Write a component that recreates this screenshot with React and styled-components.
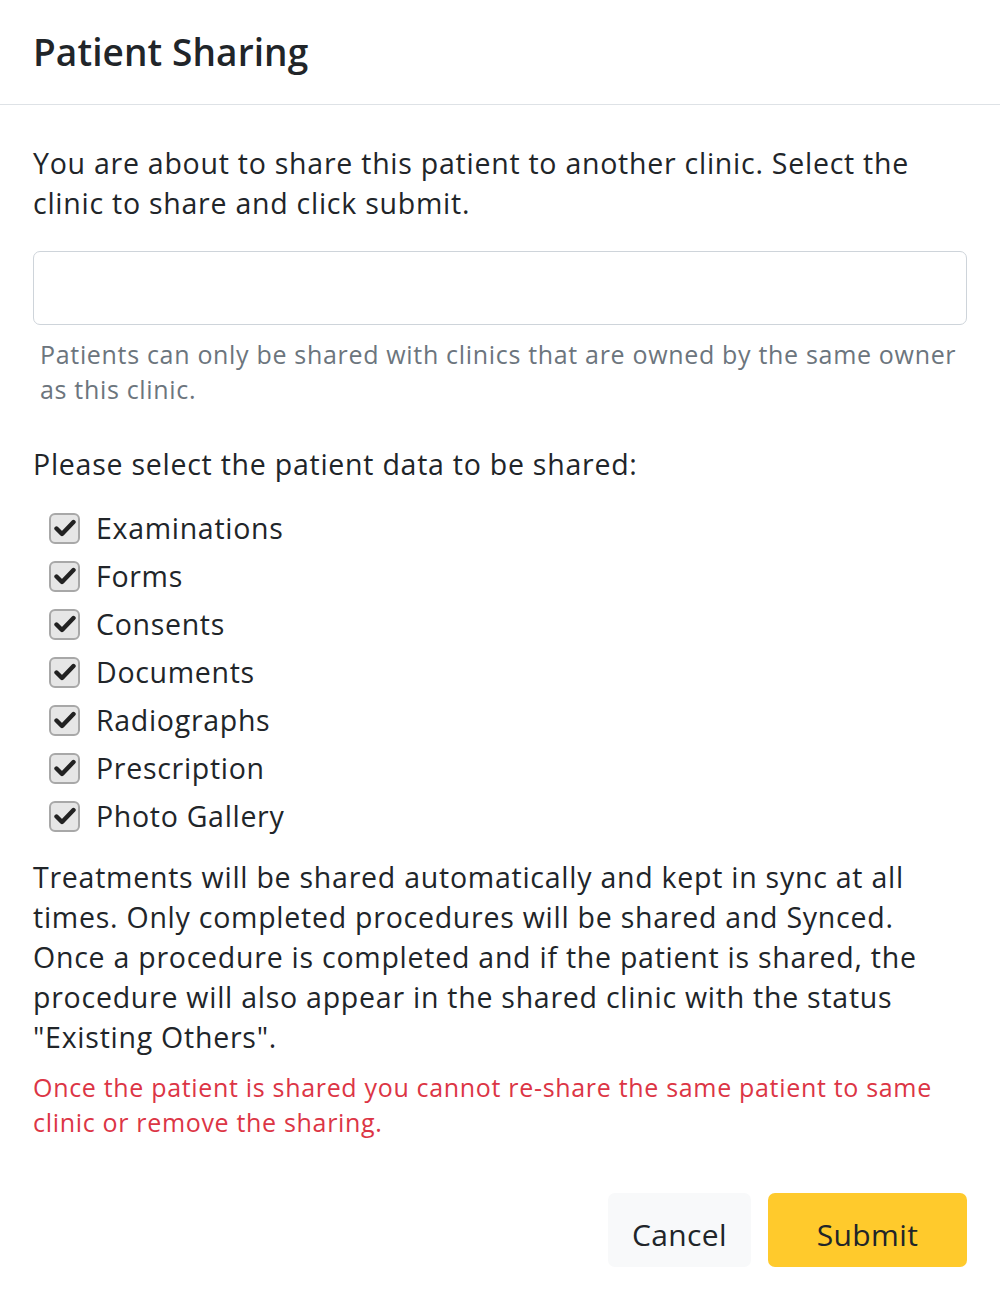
import React, { useState } from 'react';
import styled, { createGlobalStyle } from 'styled-components';

const GlobalStyle = createGlobalStyle`
  html, body {
    margin: 0;
    padding: 0;
    background: #fff;
  }
  body {
    font-family: "Segoe UI", "Open Sans", "Noto Sans", sans-serif;
    color: #212529;
  }
`;

const OPTIONS = [
  'Examinations',
  'Forms',
  'Consents',
  'Documents',
  'Radiographs',
  'Prescription',
  'Photo Gallery',
];

const Modal = styled.div`
  width: 1000px;
  background: #fff;
`;

const Header = styled.div`
  height: 104px;
  padding: 0 33px;
  display: flex;
  align-items: center;
  border-bottom: 1px solid #dee2e6;
`;

const Title = styled.h4`
  margin: 0;
  font-size: 37px;
  font-weight: 600;
  line-height: 1.5;
  letter-spacing: 0.1px;
  color: #212529;
`;

const Body = styled.div`
  padding: 38px 33px 0;
`;

const Text = styled.p`
  margin: 0;
  font-size: 28.5px;
  line-height: 40px;
  letter-spacing: 0.75px;
  color: #212529;
`;

const SmallText = styled.p`
  margin: 0;
  font-size: 25px;
  line-height: 35px;
  letter-spacing: 0.68px;
  color: ${p => (p.danger ? '#dc3545' : '#6c757d')};
  padding-left: ${p => (p.indent ? '7px' : '0')};
`;

const Input = styled.input`
  display: block;
  box-sizing: border-box;
  width: 100%;
  height: 74px;
  margin-top: 28px;
  border: 1px solid #ced4da;
  border-radius: 7px;
  padding: 0 20px;
  font-size: 26px;
  font-family: inherit;
  outline: none;
`;

const Section = styled.div`
  margin-top: ${p => p.gap}px;
`;

const CheckList = styled.div`
  display: flex;
  flex-direction: column;
  margin-top: 20px;
  padding-left: 16px;
`;

const CheckRow = styled.label`
  display: flex;
  align-items: center;
  height: 48px;
  gap: 16px;
  font-size: 28.5px;
  letter-spacing: 0.7px;
  color: #212529;
  cursor: pointer;
`;

const Box = styled.span`
  box-sizing: border-box;
  width: 31px;
  height: 31px;
  flex: none;
  border: 2px solid #a8a8a8;
  border-radius: 6px;
  background: ${p => (p.checked ? '#e6e6e6' : '#fff')};
  display: flex;
  align-items: center;
  justify-content: center;
`;

const Footer = styled.div`
  display: flex;
  justify-content: flex-end;
  gap: 17px;
  padding: 53px 33px 34px;
`;

const Button = styled.button`
  box-sizing: border-box;
  height: 74px;
  padding: 8px 20px 0;
  border: none;
  border-radius: 7px;
  font-family: inherit;
  font-size: 30px;
  letter-spacing: 0.4px;
  color: #212529;
  background: ${p => (p.primary ? '#ffca2c' : '#f8f9fa')};
  min-width: ${p => (p.primary ? '199px' : '143px')};
  cursor: pointer;
`;

const Check = () => (
  <svg width="22" height="18" viewBox="0 0 22 18">
    <path
      d="M2.5 9.5 L8 15 L19.5 3"
      fill="none"
      stroke="#222"
      strokeWidth="4.4"
      strokeLinecap="round"
      strokeLinejoin="round"
    />
  </svg>
);

const App = () => {
  const [checked, setChecked] = useState(OPTIONS.map(() => true));

  const toggle = i => {
    setChecked(c => c.map((v, j) => (j === i ? !v : v)));
  };

  return (
    <Modal>
      <GlobalStyle />
      <Header>
        <Title>Patient Sharing</Title>
      </Header>
      <Body>
        <Text>
          You are about to share this patient to another clinic. Select the
          clinic to share and click submit.
        </Text>
        <Input type="text" />
        <Section gap={12}>
          <SmallText indent>
            Patients can only be shared with clinics that are owned by the same
            owner as this clinic.
          </SmallText>
        </Section>
        <Section gap={37}>
          <Text>Please select the patient data to be shared:</Text>
        </Section>
        <CheckList>
          {OPTIONS.map((name, i) => (
            <CheckRow key={name} onClick={() => toggle(i)}>
              <Box checked={checked[i]}>{checked[i] && <Check />}</Box>
              {name}
            </CheckRow>
          ))}
        </CheckList>
        <Section gap={17}>
          <Text>
            Treatments will be shared automatically and kept in sync at all
            times. Only completed procedures will be shared and Synced. Once a
            procedure is completed and if the patient is shared, the procedure
            will also appear in the shared clinic with the status "Existing
            Others".
          </Text>
        </Section>
        <Section gap={13}>
          <SmallText danger>
            Once the patient is shared you cannot re-share the same patient to
            same clinic or remove the sharing.
          </SmallText>
        </Section>
      </Body>
      <Footer>
        <Button>Cancel</Button>
        <Button primary>Submit</Button>
      </Footer>
    </Modal>
  );
};

export default App;
